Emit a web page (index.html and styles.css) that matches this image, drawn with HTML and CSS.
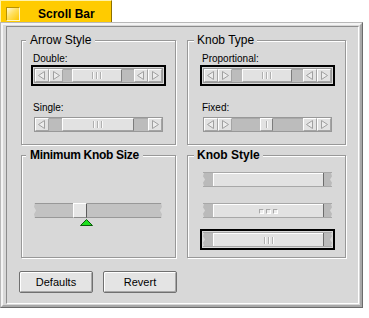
FILE: index.html
```html
<!DOCTYPE html>
<html lang="en">
<head>
    <meta charset="UTF-8">
    <title>Scroll Bar</title>
    <link rel="stylesheet" href="styles.css">
</head>
<body>

    <div class="tab">
        <span class="close"></span>
        <span class="tab-title">Scroll Bar</span>
    </div>

    <div class="window">
        <div class="frame">
            <div class="content">

                <div class="groups">

                    <div class="group group-left">
                        <div class="group-title">Arrow Style</div>
                        <div class="field-label">Double:</div>
                        <div class="pick selected">
                            <div class="sbar">
                                <span class="arrow"><svg width="12" height="11" viewBox="0 0 12 11"><polygon points="2.5,5.5 8.5,1.5 8.5,9.5" /></svg></span>
                                <span class="arrow"><svg width="12" height="11" viewBox="0 0 12 11"><polygon points="9.5,5.5 3.5,1.5 3.5,9.5" /></svg></span>
                                <span class="track w9"></span>
                                <span class="knob w50"><span class="grip"></span></span>
                                <span class="track grow"></span>
                                <span class="arrow"><svg width="12" height="11" viewBox="0 0 12 11"><polygon points="2.5,5.5 8.5,1.5 8.5,9.5" /></svg></span>
                                <span class="arrow"><svg width="12" height="11" viewBox="0 0 12 11"><polygon points="9.5,5.5 3.5,1.5 3.5,9.5" /></svg></span>
                            </div>
                        </div>
                        <div class="field-label second">Single:</div>
                        <div class="pick">
                            <div class="sbar">
                                <span class="arrow"><svg width="12" height="11" viewBox="0 0 12 11"><polygon points="2.5,5.5 8.5,1.5 8.5,9.5" /></svg></span>
                                <span class="track w13"></span>
                                <span class="knob w72"><span class="grip"></span></span>
                                <span class="track grow"></span>
                                <span class="arrow"><svg width="12" height="11" viewBox="0 0 12 11"><polygon points="9.5,5.5 3.5,1.5 3.5,9.5" /></svg></span>
                            </div>
                        </div>
                    </div>

                    <div class="group group-right">
                        <div class="group-title">Knob Type</div>
                        <div class="field-label">Proportional:</div>
                        <div class="pick selected">
                            <div class="sbar">
                                <span class="arrow"><svg width="12" height="11" viewBox="0 0 12 11"><polygon points="2.5,5.5 8.5,1.5 8.5,9.5" /></svg></span>
                                <span class="arrow"><svg width="12" height="11" viewBox="0 0 12 11"><polygon points="9.5,5.5 3.5,1.5 3.5,9.5" /></svg></span>
                                <span class="track w10"></span>
                                <span class="knob w50"><span class="grip"></span></span>
                                <span class="track grow"></span>
                                <span class="arrow"><svg width="12" height="11" viewBox="0 0 12 11"><polygon points="2.5,5.5 8.5,1.5 8.5,9.5" /></svg></span>
                                <span class="arrow"><svg width="12" height="11" viewBox="0 0 12 11"><polygon points="9.5,5.5 3.5,1.5 3.5,9.5" /></svg></span>
                            </div>
                        </div>
                        <div class="field-label second">Fixed:</div>
                        <div class="pick">
                            <div class="sbar">
                                <span class="arrow"><svg width="12" height="11" viewBox="0 0 12 11"><polygon points="2.5,5.5 8.5,1.5 8.5,9.5" /></svg></span>
                                <span class="arrow"><svg width="12" height="11" viewBox="0 0 12 11"><polygon points="9.5,5.5 3.5,1.5 3.5,9.5" /></svg></span>
                                <span class="track w28"></span>
                                <span class="knob w13"><span class="grip single"></span></span>
                                <span class="track grow"></span>
                                <span class="arrow"><svg width="12" height="11" viewBox="0 0 12 11"><polygon points="2.5,5.5 8.5,1.5 8.5,9.5" /></svg></span>
                                <span class="arrow"><svg width="12" height="11" viewBox="0 0 12 11"><polygon points="9.5,5.5 3.5,1.5 3.5,9.5" /></svg></span>
                            </div>
                        </div>
                    </div>

                    <div class="group group-left">
                        <div class="group-title bold tight">Minimum Knob Size</div>
                        <div class="slider">
                            <div class="slider-track">
                                <span class="slide-fill w39"></span>
                                <span class="slide-knob"></span>
                                <span class="slide-fill grow"></span>
                            </div>
                            <svg class="marker" width="13" height="7" viewBox="0 0 13 7"><polygon points="6.5,0.5 12.5,6.5 0.5,6.5" /></svg>
                        </div>
                    </div>

                    <div class="group group-right">
                        <div class="group-title bold">Knob Style</div>
                        <div class="pick style-first">
                            <div class="kbar">
                                <span class="kend left"></span>
                                <span class="kknob"></span>
                                <span class="kend right"></span>
                            </div>
                        </div>
                        <div class="pick style-second">
                            <div class="kbar">
                                <span class="kend left"></span>
                                <span class="kknob"><span class="dot"></span><span class="dot"></span><span class="dot"></span></span>
                                <span class="kend right"></span>
                            </div>
                        </div>
                        <div class="pick selected style-third">
                            <div class="kbar">
                                <span class="kend left"></span>
                                <span class="kknob"><span class="grip"></span></span>
                                <span class="kend right"></span>
                            </div>
                        </div>
                    </div>

                </div>

                <div class="buttons">
                    <button>Defaults</button>
                    <button>Revert</button>
                </div>

            </div>
        </div>
    </div>

</body>
</html>
```

FILE: styles.css
```css
body {
    margin: 0;
    background-color: #fff;
    font-family: "Liberation Sans", Arial, sans-serif;
    color: #000;
}

/* window tab */
.tab {
    display: flex;
    align-items: flex-start;
    width: 112px;
    height: 22px;
    box-sizing: border-box;
    padding: 6px 0 0 5px;
    background-color: #ffcb00;
    border-left: 1px solid #fff2a8;
    border-top: 1px solid #fff2a8;
    border-right: 1px solid #8c7000;
}
.close {
    width: 14px;
    height: 14px;
    box-sizing: border-box;
    border: 1px solid;
    border-color: #b89200 #fff6c8 #fff6c8 #b89200;
    background: linear-gradient(135deg, #fff8d8 0%, #ffe060 45%, #ffc800 100%);
}
.tab-title {
    margin-left: 18px;
    font-size: 12px;
    font-weight: bold;
    line-height: 14px;
}

/* window frame */
.window {
    width: 363px;
    height: 286px;
    box-sizing: border-box;
    border: 1px solid;
    border-color: #b8b8b8 #6c6c6c #6c6c6c #b8b8b8;
}
.frame {
    height: 100%;
    box-sizing: border-box;
    border: 2px solid;
    border-color: #f4f4f4 #a8a8a8 #a8a8a8 #f4f4f4;
    padding: 1px 1px 1px 3px;
    background-color: #d8d8d8;
}
.content {
    height: 100%;
    box-sizing: border-box;
    border: 1px solid;
    border-color: #8c8c8c #fff #fff #8c8c8c;
    padding: 13px 0 0 14px;
    background-color: #d8d8d8;
}

/* group boxes */
.groups {
    display: grid;
    grid-template-columns: 155px 159px;
    grid-template-rows: 105px 103px;
    column-gap: 11px;
    row-gap: 10px;
}
.group {
    box-sizing: border-box;
    border: 1px solid #989898;
    box-shadow: inset 1px 1px 0 #fff, 1px 1px 0 #fff;
}
.group-left {
    padding-left: 9px;
}
.group-right {
    padding-left: 12px;
}
.group-title {
    width: fit-content;
    margin-top: -8px;
    margin-left: -5px;
    padding: 0 4px;
    background-color: #d8d8d8;
    font-size: 12px;
    line-height: 14px;
}
.group-right .group-title {
    margin-left: -6px;
    padding: 0 3px;
}
.group-title.bold {
    font-weight: bold;
}
.group-title.tight {
    letter-spacing: -0.3px;
}
.field-label {
    margin: 6px 0 0 2px;
    font-size: 10px;
    line-height: 12px;
}
.field-label.second {
    margin-top: 16px;
}

/* selectable sample */
.pick {
    width: fit-content;
    border: 2px solid transparent;
    padding: 1px;
}
.pick.selected {
    border-color: #000;
}

/* scroll bar sample */
.sbar {
    display: flex;
    width: 129px;
    height: 15px;
    box-sizing: border-box;
    border: 1px solid #989898;
    background-color: #bcbcbc;
}
.arrow {
    display: flex;
    width: 14px;
    flex: none;
    box-sizing: border-box;
    border: 1px solid;
    border-color: #fff #a4a4a4 #a4a4a4 #fff;
    background-color: #e2e2e2;
}
.arrow svg {
    display: block;
}
.arrow polygon {
    fill: #ececec;
    stroke: #a0a0a0;
    stroke-width: 1;
}
.track {
    flex: none;
    box-sizing: border-box;
    border-top: 1px solid #a8a8a8;
    background-color: #bcbcbc;
}
.grow {
    flex: 1;
}
.w9 { width: 9px; }
.w10 { width: 10px; }
.w13 { width: 13px; }
.w28 { width: 28px; }
.w39 { width: 39px; }
.w50 { width: 50px; }
.w72 { width: 72px; }
.knob {
    display: flex;
    align-items: center;
    justify-content: center;
    flex: none;
    box-sizing: border-box;
    border: 1px solid;
    border-color: #fff #7c7c7c #a4a4a4 #fff;
    background-color: #e2e2e2;
}
.w13.knob {
    width: 13px;
}
.grip {
    width: 10px;
    height: 7px;
    background: repeating-linear-gradient(to right, #b0b0b0 0 1px, #fafafa 1px 2px, transparent 2px 4px);
}
.grip.single {
    width: 2px;
}

/* minimum knob size slider */
.slider {
    width: 128px;
    margin: 41px 0 0 3px;
}
.slider-track {
    display: flex;
    height: 15px;
    clip-path: polygon(1px 0, calc(100% - 1px) 0, 100% 25%, calc(100% - 2px) 50%, 100% 75%, calc(100% - 1px) 100%, 1px 100%, 0 75%, 2px 50%, 0 25%);
}
.slide-fill {
    flex: none;
    box-sizing: border-box;
    border-top: 1px solid #989898;
    border-bottom: 1px solid #989898;
    background-color: #c2c2c2;
}
.slide-fill.grow {
    flex: 1;
}
.slide-knob {
    width: 14px;
    flex: none;
    box-sizing: border-box;
    border: 1px solid;
    border-color: #fff #5c5c5c #8c8c8c #fff;
    background-color: #e6e6e6;
}
.marker {
    display: block;
    margin: 1px 0 0 46px;
}
.marker polygon {
    fill: #1ee01e;
    stroke: #0a5a0a;
    stroke-width: 1;
}

/* knob style samples */
.style-first {
    margin-top: 7px;
}
.style-second {
    margin-top: 10px;
}
.style-third {
    margin-top: 8px;
}
.kbar {
    display: flex;
    width: 129px;
    height: 15px;
    box-sizing: border-box;
    border-top: 1px solid #a8a8a8;
    border-bottom: 1px solid #a8a8a8;
}
.kend {
    flex: none;
    background-color: #bababa;
}
.kend.left {
    width: 10px;
    clip-path: polygon(1px 0, 100% 0, 100% 100%, 1px 100%, 0 75%, 2px 50%, 0 25%);
}
.kend.right {
    width: 8px;
    border-left: 1px solid #6c6c6c;
    clip-path: polygon(0 0, calc(100% - 1px) 0, 100% 25%, calc(100% - 2px) 50%, 100% 75%, calc(100% - 1px) 100%, 0 100%);
}
.kknob {
    display: flex;
    align-items: center;
    justify-content: center;
    gap: 2px;
    flex: 1;
    box-sizing: border-box;
    border-left: 1px solid #fff;
    border-top: 1px solid #fff;
    background-color: #e2e2e2;
}
.dot {
    width: 5px;
    height: 5px;
    box-sizing: border-box;
    border: 1px solid;
    border-color: #a8a8a8 #fff #fff #a8a8a8;
    background-color: #ececec;
}

/* bottom buttons */
.buttons {
    display: flex;
    gap: 10px;
    margin: 13px 0 0 -2px;
}
button {
    width: 74px;
    height: 22px;
    box-sizing: border-box;
    padding: 0;
    font-family: "Liberation Sans", Arial, sans-serif;
    font-size: 11px;
    color: #000;
    background-color: #e4e4e4;
    border: 1px solid #707070;
    border-radius: 2px;
    box-shadow: inset 1px 1px 0 #fff, inset -1px -1px 0 #a8a8a8;
}
```
